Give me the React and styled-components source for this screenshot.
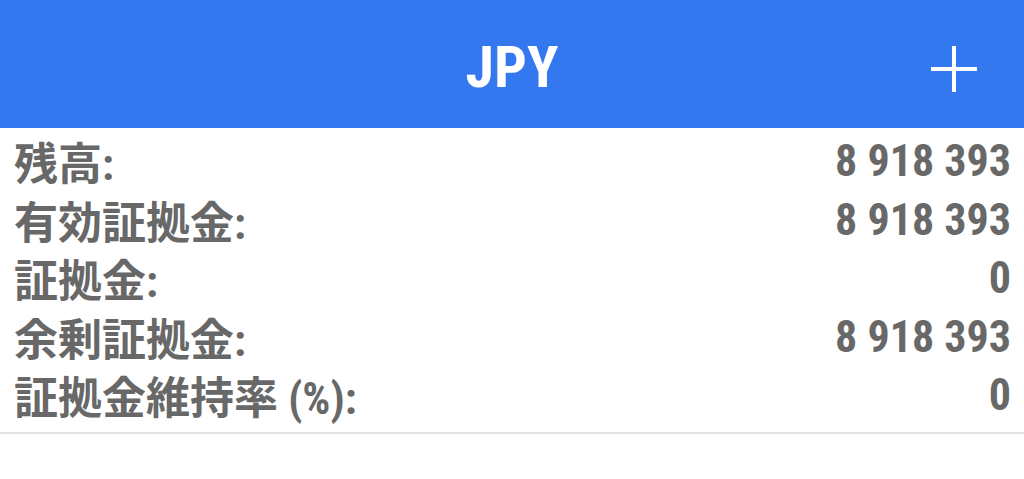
import React from 'react'
import styled, { createGlobalStyle } from 'styled-components'

const Global = createGlobalStyle`
  body {
    margin: 0;
    background: #fff;
    font-family: Roboto, "Noto Sans CJK JP", sans-serif;
  }
`

const Page = styled.div`
  width: 1024px;
  height: 479px;
  overflow: hidden;
  background: #fff;
`

const Header = styled.header`
  height: 128px;
  background: #3478f0;
  display: grid;
  grid-template-columns: 1fr auto 1fr;
  align-items: center;
`

const Title = styled.h1`
  grid-column: 2;
  margin: 0;
  color: #fff;
  font-size: 58px;
  line-height: 1;
  font-weight: 700;
  font-stretch: 85%;
  padding-top: 5px;
`

const AddBtn = styled.button`
  grid-column: 3;
  justify-self: end;
  margin-right: 46px;
  margin-top: 10px;
  width: 48px;
  height: 48px;
  padding: 0;
  border: none;
  background: none;
  display: flex;
`

const List = styled.div`
  padding: 4px 13px 7px 14px;
  border-bottom: 2px solid #e2e2e2;
`

const Row = styled.div`
  height: 58.5px;
  display: flex;
  align-items: center;
  justify-content: space-between;
  color: #686868;
  font-size: 44px;
  font-weight: 700;
  font-stretch: 84%;
`

const rows = [
  ['残高:', '8 918 393'],
  ['有効証拠金:', '8 918 393'],
  ['証拠金:', '0'],
  ['余剰証拠金:', '8 918 393'],
  ['証拠金維持率 (%):', '0'],
]

export default function App() {
  return (
    <Page>
      <Global />
      <Header>
        <Title>JPY</Title>
        <AddBtn>
          <svg width="48" height="48" viewBox="0 0 48 48">
            <path d="M24 1v46M1 24h46" stroke="#fff" strokeWidth="4" />
          </svg>
        </AddBtn>
      </Header>
      <List>
        {rows.map(([k, v]) => (
          <Row key={k}>
            <span>{k}</span>
            <span>{v}</span>
          </Row>
        ))}
      </List>
    </Page>
  )
}
